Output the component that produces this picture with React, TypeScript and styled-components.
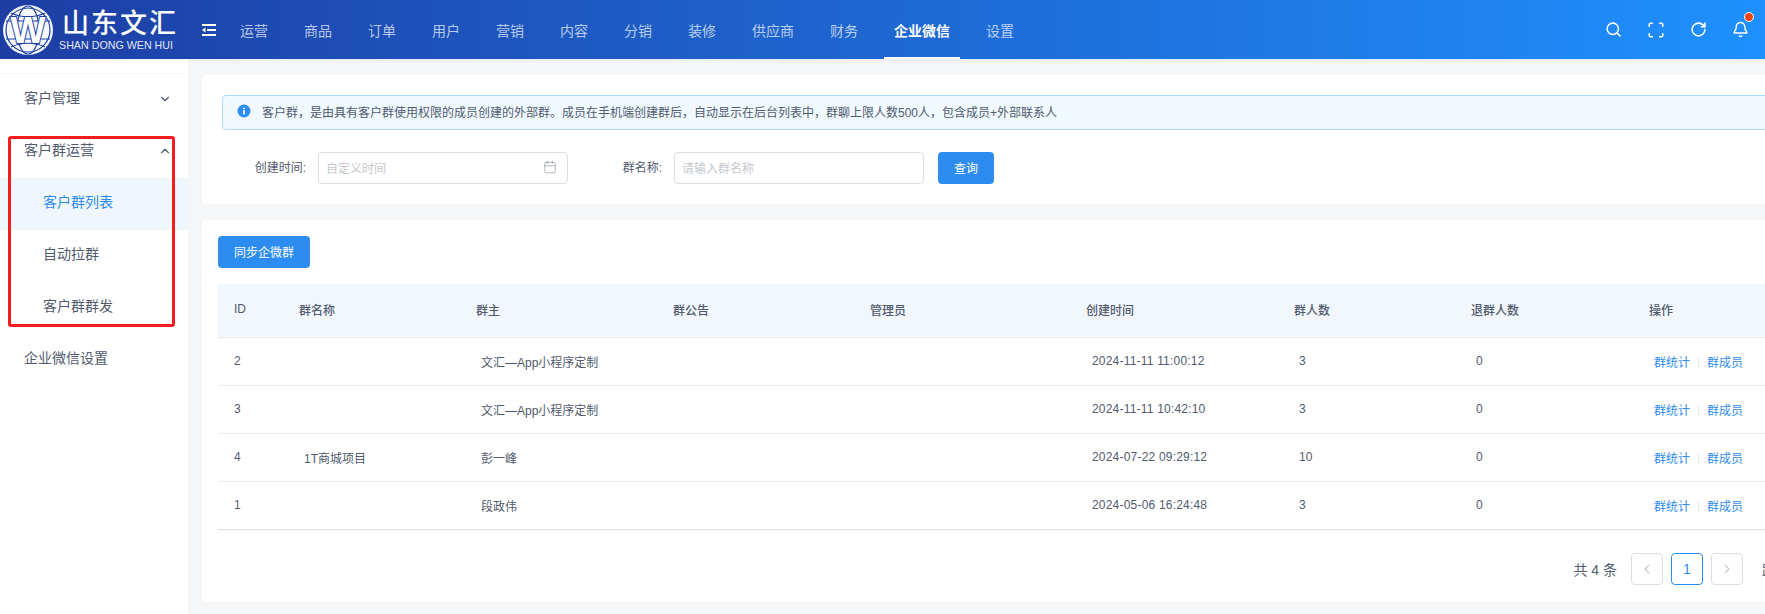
import React from "react";
import styled, { createGlobalStyle } from "styled-components";
import { Search, Scan, RotateCw, Bell, ChevronDown, ChevronUp, Calendar, ChevronLeft, ChevronRight } from "lucide-react";

const navItems = ["运营", "商品", "订单", "用户", "营销", "内容", "分销", "装修", "供应商", "财务", "企业微信", "设置"];

const rows = [
  { id: 2, name: "", owner: "文汇—App小程序定制", time: "2024-11-11 11:00:12", count: 3 },
  { id: 3, name: "", owner: "文汇—App小程序定制", time: "2024-11-11 10:42:10", count: 3 },
  { id: 4, name: "1T商城项目", owner: "彭一峰", time: "2024-07-22 09:29:12", count: 10 },
  { id: 1, name: "", owner: "段政伟", time: "2024-05-06 16:24:48", count: 3 },
];

const columns = [65, 177, 197, 197, 216, 208, 177, 178, 237];

function Logo() {
  return (
    <LogoWrap>
      <svg width="52" height="52" viewBox="0 0 52 52">
        <circle cx="26" cy="26" r="25" fill="#f4f7fc" />
        <g fill="none" stroke="#1d3fa5" strokeWidth="1.2">
          <circle cx="26" cy="26" r="22" />
          <ellipse cx="26" cy="26" rx="11" ry="24" />
          <path d="M4 17h44M4 35h44M9 9c10 5 24 5 34 0M9 43c10-5 24-5 34 0" />
        </g>
        <text
          x="26"
          y="39"
          textAnchor="middle"
          fontFamily="Liberation Sans, sans-serif"
          fontWeight="700"
          fontSize="37"
          fill="#ffffff"
          stroke="#1d3fa5"
          strokeWidth="2"
          paintOrder="stroke"
        >
          W
        </text>
      </svg>
      <LogoText>
        <LogoTitle>山东文汇</LogoTitle>
        <LogoSub>SHAN DONG WEN HUI</LogoSub>
      </LogoText>
    </LogoWrap>
  );
}

function CollapseIcon() {
  return (
    <svg width="14" height="12" viewBox="0 0 14 12" fill="#fff">
      <rect x="0" y="0" width="14" height="2" />
      <rect x="5" y="5" width="9" height="2" />
      <rect x="0" y="10" width="14" height="2" />
      <path d="M0 6l3.5-2.6v5.2z" />
    </svg>
  );
}

function InfoIcon() {
  return (
    <svg width="14" height="14" viewBox="0 0 14 14">
      <circle cx="7" cy="7" r="6.5" fill="#2d8cf0" />
      <rect x="6.2" y="6" width="1.6" height="4.4" fill="#fff" />
      <rect x="6.2" y="3.6" width="1.6" height="1.6" fill="#fff" />
    </svg>
  );
}

function Header() {
  return (
    <TopBar>
      <Logo />
      <Collapse>
        <CollapseIcon />
      </Collapse>
      <Nav>
        {navItems.map((item) => (
          <NavLink key={item} $active={item === "企业微信"}>
            {item}
          </NavLink>
        ))}
      </Nav>
      <TopIcons>
        <Search size={17} strokeWidth={2.2} />
        <Scan size={18} strokeWidth={2.2} />
        <RotateCw size={17} strokeWidth={2.2} />
        <BellWrap>
          <Bell size={17} strokeWidth={2} />
          <Dot />
        </BellWrap>
      </TopIcons>
    </TopBar>
  );
}

function Sidebar() {
  return (
    <Side>
      <SideItem>
        客户管理
        <ChevronDown size={14} strokeWidth={2} />
      </SideItem>
      <SideItem>
        客户群运营
        <ChevronUp size={14} strokeWidth={2} />
      </SideItem>
      <SubItem $active>客户群列表</SubItem>
      <SubItem>自动拉群</SubItem>
      <SubItem>客户群群发</SubItem>
      <SideItem>企业微信设置</SideItem>
      <RedMark />
    </Side>
  );
}

function FilterCard() {
  return (
    <Card>
      <Alert>
        <InfoIcon />
        客户群，是由具有客户群使用权限的成员创建的外部群。成员在手机端创建群后，自动显示在后台列表中，群聊上限人数500人，包含成员+外部联系人
      </Alert>
      <FilterRow>
        <FieldLabel>创建时间:</FieldLabel>
        <FieldBox>
          自定义时间
          <Calendar size={14} strokeWidth={1} color="#808695" />
        </FieldBox>
        <FieldLabel>群名称:</FieldLabel>
        <FieldBox>请输入群名称</FieldBox>
        <QueryButton>查询</QueryButton>
      </FilterRow>
    </Card>
  );
}

function GroupTable() {
  return (
    <TableCard>
      <SyncButton>同步企微群</SyncButton>
      <Table>
        <colgroup>
          {columns.map((w, i) => (
            <col key={i} width={w} />
          ))}
        </colgroup>
        <thead>
          <tr>
            <th>ID</th>
            <th>群名称</th>
            <th>群主</th>
            <th>群公告</th>
            <th>管理员</th>
            <th>创建时间</th>
            <th>群人数</th>
            <th>退群人数</th>
            <th>操作</th>
          </tr>
        </thead>
        <tbody>
          {rows.map((row) => (
            <tr key={row.id}>
              <td>{row.id}</td>
              <td>{row.name}</td>
              <td>{row.owner}</td>
              <td></td>
              <td></td>
              <TimeCell>{row.time}</TimeCell>
              <td>{row.count}</td>
              <td>0</td>
              <td>
                <ActionLink>群统计</ActionLink>
                <ActionDivider />
                <ActionLink>群成员</ActionLink>
              </td>
            </tr>
          ))}
        </tbody>
      </Table>
      <Pager>
        <PagerTotal>共 4 条</PagerTotal>
        <PageButton $disabled>
          <ChevronLeft size={16} strokeWidth={1.6} />
        </PageButton>
        <PageButton $active>1</PageButton>
        <PageButton $disabled>
          <ChevronRight size={16} strokeWidth={1.6} />
        </PageButton>
        <PagerJump>
          跳至
          <JumpInput />页
        </PagerJump>
      </Pager>
    </TableCard>
  );
}

export default function App() {
  return (
    <Page>
      <GlobalStyle />
      <Header />
      <Body>
        <Sidebar />
        <Main>
          <FilterCard />
          <GroupTable />
        </Main>
      </Body>
    </Page>
  );
}

const GlobalStyle = createGlobalStyle`
  html,
  body {
    margin: 0;
    padding: 0;
    overflow: hidden;
    background-color: #f5f6f8;
  }

  *,
  *:before,
  *:after {
    box-sizing: border-box;
    font-family: "Liberation Sans", "Noto Sans CJK SC", sans-serif;
  }
`;

const Page = styled.div`
  width: 1765px;
  height: 614px;
  display: flex;
  flex-direction: column;
  overflow: hidden;
  color: #515a6e;
`;

const TopBar = styled.header`
  flex: none;
  height: 59px;
  display: flex;
  align-items: center;
  color: #fff;
  background: linear-gradient(90deg, #1d3ea4 0%, #1f90ff 100%);
  box-shadow: 0 1px 4px rgba(0, 21, 41, 0.08);
  position: relative;
  z-index: 2;
`;

const LogoWrap = styled.div`
  width: 202px;
  flex: none;
  display: flex;
  align-items: center;
  padding-left: 2px;
`;

const LogoText = styled.div`
  display: flex;
  flex-direction: column;
  margin-left: 5px;
`;

const LogoTitle = styled.div`
  font-size: 27px;
  font-weight: 500;
  line-height: 30px;
  letter-spacing: 2px;
  padding-left: 3px;
  white-space: nowrap;
`;

const LogoSub = styled.div`
  font-size: 10.7px;
  line-height: 12px;
  white-space: nowrap;
  color: rgba(255, 255, 255, 0.9);
`;

const Collapse = styled.div`
  width: 28px;
  flex: none;
  display: flex;
  align-items: center;
`;

const Nav = styled.nav`
  display: flex;
  gap: 16px;
  height: 100%;
`;

const NavLink = styled.a<{ $active?: boolean }>`
  height: 100%;
  padding: 0 10px;
  display: flex;
  align-items: center;
  font-size: 14px;
  font-weight: ${(p) => (p.$active ? 700 : 400)};
  color: ${(p) => (p.$active ? "#fff" : "rgba(255, 255, 255, 0.7)")};
  border-bottom: 2px solid ${(p) => (p.$active ? "#fff" : "transparent")};
  border-top: 2px solid transparent;
`;

const TopIcons = styled.div`
  margin-left: auto;
  padding-right: 16px;
  display: flex;
  align-items: center;
  gap: 25px;
`;

const BellWrap = styled.div`
  position: relative;
  display: flex;
`;

const Dot = styled.span`
  position: absolute;
  top: -9px;
  right: -5px;
  width: 10px;
  height: 10px;
  border-radius: 50%;
  background-color: #f0420f;
  border: 1px solid #fff;
`;

const Body = styled.div`
  flex: 1;
  display: flex;
  min-height: 0;
`;

const Side = styled.aside`
  flex: none;
  width: 188px;
  padding-top: 15px;
  background-color: #fff;
  position: relative;
  &:before {
    content: "";
    position: absolute;
    top: 14px;
    left: 0;
    right: 0;
    height: 1px;
    background-color: #f5f6f8;
  }
`;

const SideItem = styled.div`
  height: 52px;
  padding: 0 16px 6px 24px;
  display: flex;
  align-items: center;
  justify-content: space-between;
  font-size: 14px;
  color: #515a6e;

  svg {
    margin-top: 3px;
  }
`;

const SubItem = styled.div<{ $active?: boolean }>`
  height: 52px;
  padding: 0 0 6px 43px;
  display: flex;
  align-items: center;
  font-size: 14px;
  color: ${(p) => (p.$active ? "#2d8cf0" : "#515a6e")};
  background-color: ${(p) => (p.$active ? "#f0f6fd" : "transparent")};
`;

const RedMark = styled.div`
  position: absolute;
  left: 8px;
  top: 77px;
  width: 167px;
  height: 191px;
  border: 3px solid #f31d1d;
  border-radius: 3px;
`;

const Main = styled.main`
  flex: 1;
  min-width: 0;
  padding: 16px 0 0 14px;
  display: flex;
  flex-direction: column;
  gap: 16px;
  overflow: hidden;
`;

const Card = styled.section`
  width: 1684px;
  height: 129px;
  padding: 20px;
  background-color: #fff;
  border-radius: 4px;
`;

const Alert = styled.div`
  height: 35px;
  padding: 0 0 2px 14px;
  display: flex;
  align-items: center;
  gap: 11px;
  font-size: 12px;
  color: #515a6e;
  background-color: #f0f9ff;
  border: 1px solid #abdcff;
  border-radius: 4px;

  svg {
    margin-top: -2px;
  }
`;

const FilterRow = styled.div`
  margin-top: 22px;
  display: flex;
  align-items: center;
`;

const FieldLabel = styled.label`
  width: 96px;
  padding-right: 12px;
  padding-bottom: 4px;
  margin-left: 10px;
  text-align: right;
  font-size: 12px;
  color: #515a6e;
  &:first-child {
    margin-left: 0;
  }
`;

const FieldBox = styled.div`
  width: 250px;
  height: 32px;
  padding: 0 10px 2px 7px;
  display: flex;
  align-items: center;
  justify-content: space-between;
  font-size: 12px;
  color: #c5c8ce;
  background-color: #fff;
  border: 1px solid #dcdee2;
  border-radius: 4px;
`;

const QueryButton = styled.button`
  width: 56px;
  height: 32px;
  margin-left: 14px;
  padding: 0 0 2px;
  font-size: 12px;
  color: #fff;
  background-color: #2d8cf0;
  border: none;
  border-radius: 4px;
`;

const TableCard = styled.section`
  width: 1684px;
  height: 382px;
  padding: 16px;
  background-color: #fff;
  border-radius: 4px;
`;

const SyncButton = styled.button`
  display: block;
  width: 92px;
  height: 32px;
  padding: 0 0 2px;
  font-size: 12px;
  color: #fff;
  background-color: #2d8cf0;
  border: none;
  border-radius: 4px;
`;

const Table = styled.table`
  width: 1652px;
  margin-top: 16px;
  table-layout: fixed;
  border-collapse: collapse;
  border-spacing: 0;
  font-size: 12px;
  color: #515a6e;

  th {
    height: 53px;
    padding: 0 0 2px 16px;
    text-align: left;
    font-weight: 500;
    background-color: #f2f7fd;
    border-bottom: 1px solid #e8eaec;
  }
  td {
    height: 48px;
    padding: 0 0 0 21px;
    border-bottom: 1px solid #e8eaec;
  }
  td:first-child {
    padding-left: 16px;
  }
  tbody tr:last-child td {
    border-bottom-color: #dcdee2;
  }
`;

const TimeCell = styled.td`
  && {
    padding-left: 22px;
  }
  letter-spacing: 0.2px;
`;

const ActionLink = styled.a`
  color: #2d8cf0;
`;

const ActionDivider = styled.span`
  display: inline-block;
  width: 1px;
  height: 11px;
  margin: 0 8px;
  vertical-align: -1px;
  background-color: #e8eaec;
`;

const Pager = styled.div`
  margin-top: 23px;
  display: flex;
  align-items: center;
  gap: 8px;
  justify-content: flex-end;
  font-size: 14px;
  color: #515a6e;
`;

const PagerTotal = styled.span`
  margin-right: 6px;
`;

const PageButton = styled.span<{ $active?: boolean; $disabled?: boolean }>`
  width: 32px;
  height: 32px;
  display: flex;
  align-items: center;
  justify-content: center;
  color: ${(p) => (p.$active ? "#2d8cf0" : "#c5c8ce")};
  border: 1px solid ${(p) => (p.$active ? "#2d8cf0" : "#dcdee2")};
  border-radius: 4px;
`;

const PagerJump = styled.span`
  margin-left: 11px;
  display: flex;
  align-items: center;
  gap: 8px;
`;

const JumpInput = styled.span`
  width: 50px;
  height: 32px;
  border: 1px solid #dcdee2;
  border-radius: 4px;
`;
